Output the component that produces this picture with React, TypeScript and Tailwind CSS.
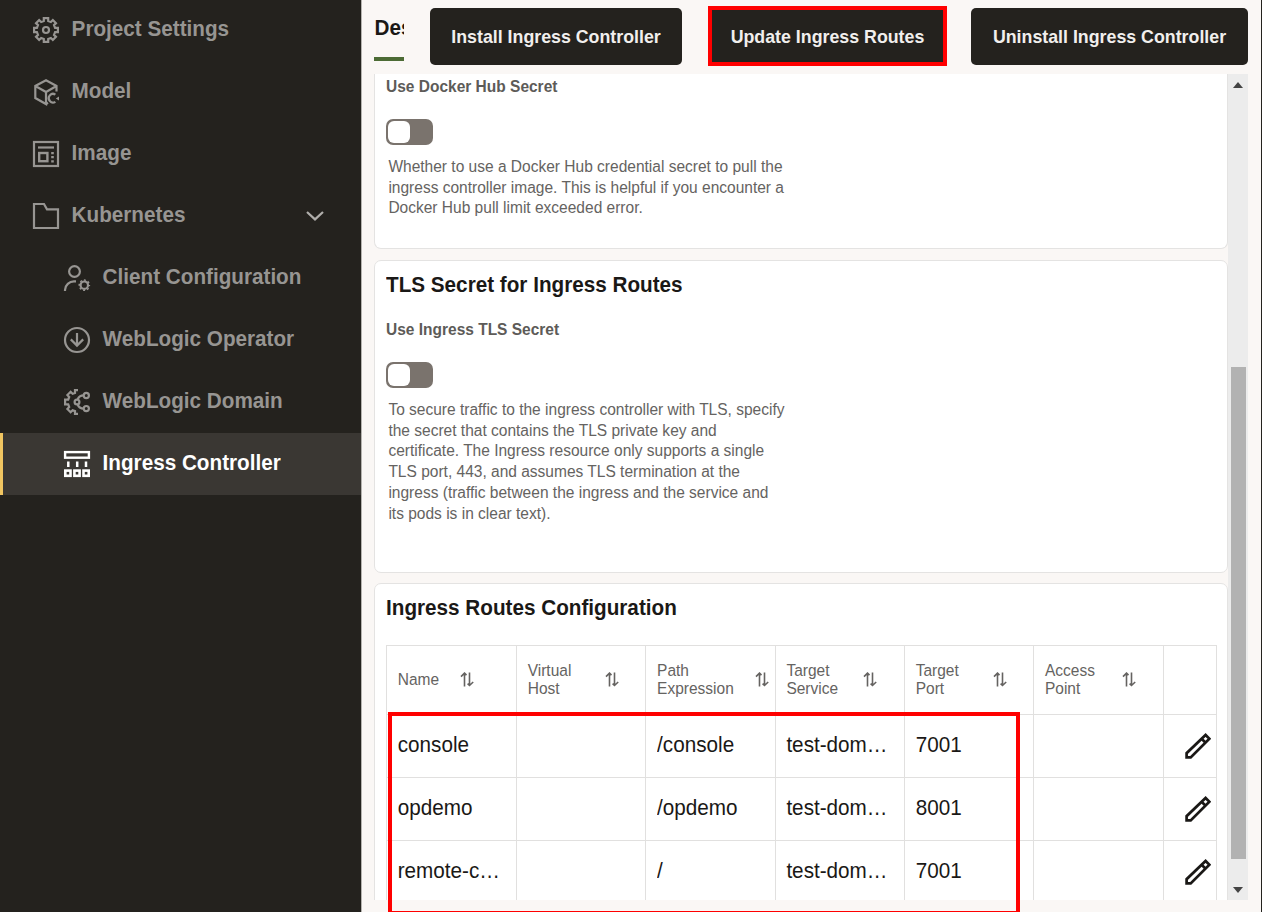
import type { ReactNode } from "react";

const gearPoints = (cx: number, cy: number, outer: number, inner: number, half: number) => {
  const points: string[] = [];
  for (let k = 0; k < 8; k++) {
    const a = (k * Math.PI) / 4;
    const at = (x: number, y: number) =>
      points.push(`${(cx + x * Math.cos(a) - y * Math.sin(a)).toFixed(2)},${(cy + x * Math.sin(a) + y * Math.cos(a)).toFixed(2)}`);
    at(-half, -inner);
    at(-half, -outer);
    at(half, -outer);
    at(half, -inner);
  }
  return points.join(" ");
};

function Icon({ children }: { children: ReactNode }) {
  return (
    <svg viewBox="0 0 26 26" fill="none" stroke="currentColor" strokeWidth="2.2" className="size-[26px] shrink-0 overflow-visible">
      {children}
    </svg>
  );
}

const SettingsIcon = () => (
  <Icon>
    <polygon points={gearPoints(13, 13, 11.9, 9.1, 2.2)} />
    <circle cx="13" cy="13" r="3" />
  </Icon>
);

const ModelIcon = () => (
  <Icon>
    <path d="M23.5 12.5V7L13 1.2 2.3 7v12L13 25V13L2.3 7M13 13l10.5-6" />
    <path d="M13 25l2-1.2M22.4 15.6a4.3 4.3 0 1 0 0 7.2" />
    <path d="M26 17.4v4l-3.2-2z" fill="currentColor" stroke="none" />
  </Icon>
);

const ImageIcon = () => (
  <Icon>
    <rect x="1" y="1" width="24" height="24" />
    <path d="M5 6.5h16" />
    <rect x="6.2" y="12" width="8.2" height="8.2" strokeWidth="2.4" />
    <path d="M19.5 11v10.5" strokeDasharray="2.2 1.9" strokeWidth="2.6" />
  </Icon>
);

const FolderIcon = () => (
  <Icon>
    <path d="M1 25V1h10l3 5.3h11V25z" />
  </Icon>
);

const ClientIcon = () => (
  <Icon>
    <circle cx="10.5" cy="6.5" r="5.4" />
    <path d="M1 26v-1a9 9 0 0 1 9-8.6h2" />
    <circle cx="20.3" cy="20.2" r="3.7" strokeWidth="2.2" />
    <circle cx="20.3" cy="20.2" r="5.1" strokeWidth="1.5" strokeDasharray="2 2.005" strokeDashoffset="1" />
  </Icon>
);

const OperatorIcon = () => (
  <Icon>
    <circle cx="13" cy="13" r="12" />
    <path d="M13 6v12.5M6.8 12.4l6.2 6.2 6.2-6.2" />
  </Icon>
);

const DomainIcon = () => (
  <Icon>
    <polyline points="14,1.1 11,1.1 11,3.9 8.6,4.8 6.6,2.8 3.4,6 5.2,8 4.2,10.7 1.1,10.7 1.1,15.3 4.2,15.3 5.2,18 3.4,20 6.6,23.2 8.6,21.2 11,22.1 11,24.9 14,24.9" />
    <circle cx="13" cy="13" r="2.4" />
    <circle cx="22.3" cy="6.5" r="2.6" />
    <circle cx="22.3" cy="19.6" r="2.6" />
    <path d="M13.6 10.6c1-3 3-4.2 6.2-4.2M13.6 15.4c1 3 3 4.2 6.2 4.2" />
  </Icon>
);

const IngressIcon = () => (
  <Icon>
    <rect x="1.1" y="1.1" width="23.8" height="5.6" strokeWidth="2.4" />
    <path d="M4.3 10.5V16M13.2 10.5V16M22 10.5V16" strokeWidth="2.5" />
    <rect x="1.3" y="19.6" width="5.2" height="5.2" strokeWidth="2.6" />
    <rect x="10.4" y="19.6" width="5.2" height="5.2" strokeWidth="2.6" />
    <rect x="19.5" y="19.6" width="5.2" height="5.2" strokeWidth="2.6" />
  </Icon>
);

const SortIcon = () => (
  <svg viewBox="0 0 14 15" fill="none" stroke="currentColor" strokeWidth="1.6" className="h-[15px] w-[14px] shrink-0">
    <path d="M4.5 14.5V1.4M1 4.6l3.5-3.5 2 2M9.5 0.5v13M7.6 11.6l1.9 1.9L13.2 10" />
  </svg>
);

const PencilIcon = () => (
  <svg viewBox="0 0 26 26" fill="none" stroke="currentColor" strokeWidth="2.7" className="size-[26px] shrink-0">
    <path d="M1.6 24.4v-4.2L20.6 2l3.8 3.8L5.7 24.4zM16.6 5.8l4 4" />
  </svg>
);

type NavEntry = { label: string; icon: ReactNode; nested?: boolean; active?: boolean; open?: boolean };

const nav: NavEntry[] = [
  { label: "Project Settings", icon: <SettingsIcon /> },
  { label: "Model", icon: <ModelIcon /> },
  { label: "Image", icon: <ImageIcon /> },
  { label: "Kubernetes", icon: <FolderIcon />, open: true },
  { label: "Client Configuration", icon: <ClientIcon />, nested: true },
  { label: "WebLogic Operator", icon: <OperatorIcon />, nested: true },
  { label: "WebLogic Domain", icon: <DomainIcon />, nested: true },
  { label: "Ingress Controller", icon: <IngressIcon />, nested: true, active: true },
];

function Sidebar() {
  return (
    <nav className="flex h-full w-[361px] shrink-0 flex-col bg-[#24221e]">
      {nav.map((item) => (
        <div
          key={item.label}
          className={`flex h-[62px] shrink-0 items-center border-l-[3px] pr-[37px] first:-mt-px ${
            item.active ? "border-[#f0c561] bg-[#3a3733] text-white" : "border-transparent text-[#979592]"
          } ${item.nested ? "pl-[61px]" : "pl-[30px]"}`}
        >
          {item.icon}
          <span className="mb-[2px] ml-[12.6px] flex-1 scale-y-[1.06] text-[20.7px] leading-[26px] font-bold">{item.label}</span>
          {item.open && (
            <svg viewBox="0 0 18 10" fill="none" stroke="#b0aeab" strokeWidth="2.2" className="h-[10px] w-[18px]">
              <path d="M1 1l8 7.4L17 1" />
            </svg>
          )}
        </div>
      ))}
    </nav>
  );
}

function ActionButton({ children, className }: { children: string; className: string }) {
  return (
    <button className={`h-[57px] shrink-0 rounded-[5px] bg-[#24221e] text-[17.8px] font-bold whitespace-nowrap text-[#f1efed] ${className}`}>
      <span className="mt-px block scale-y-[1.07]">{children}</span>
    </button>
  );
}

function Toggle() {
  return (
    <div className="flex h-[26px] w-[46.5px] items-center rounded-[7px] bg-[#7a736d] pl-[2.4px]">
      <div className="h-[21.5px] w-[21.5px] rounded-[6px] bg-white" />
    </div>
  );
}

const columns = [
  { lines: ["Name"], gap: "w-[62px]" },
  { lines: ["Virtual", "Host"], gap: "w-[77px]" },
  { lines: ["Path", "Expression"], gap: "w-[98px]" },
  { lines: ["Target", "Service"], gap: "w-[77px]" },
  { lines: ["Target", "Port"], gap: "w-[77px]" },
  { lines: ["Access", "Point"], gap: "w-[77px]" },
];

const routes = [
  ["console", "", "/console", "test-dom…", "7001", ""],
  ["opdemo", "", "/opdemo", "test-dom…", "8001", ""],
  ["remote-c…", "", "/", "test-dom…", "7001", ""],
];

const gridColumns = "grid grid-cols-[130px_129.4px_129.3px_129.3px_129.3px_129.3px_53px]";

function RoutesTable() {
  return (
    <div className="w-[831px] border-t border-l border-[#e1e0df]">
      <div className={`${gridColumns} h-[68.5px] border-b border-[#e1e0df]`}>
        {columns.map((column, i) => (
          <div key={i} className="flex items-center border-r border-[#e1e0df] pl-[10.7px] text-[15.5px] leading-[18px] text-[#656361]">
            <span className={`shrink-0 ${column.gap}`}>
              {column.lines.map((line) => (
                <span key={line} className="block scale-y-[1.07]">
                  {line}
                </span>
              ))}
            </span>
            <SortIcon />
          </div>
        ))}
        <div className="border-r border-[#e1e0df]" />
      </div>
      {routes.map((route) => (
        <div key={route[0]} className={`${gridColumns} h-[63.4px] border-b border-[#e1e0df]`}>
          {route.map((value, i) => (
            <div key={i} className="flex items-center border-r border-[#e1e0df] pb-[2px] pl-[10.7px]">
              <span className="scale-y-[1.06] text-[20.7px] leading-[26px] whitespace-nowrap text-[#1a1816]">{value}</span>
            </div>
          ))}
          <div className="flex items-center border-r border-[#e1e0df] pl-[21.4px] text-[#1a1816]">
            <PencilIcon />
          </div>
        </div>
      ))}
    </div>
  );
}

const card = "shrink-0 border border-[#e4e3e2] bg-white pl-[11px]";
const label = "scale-y-[1.07] text-[15.5px] leading-[20px] font-bold text-[#5d5b58]";
const helpLine = "block scale-y-[1.07]";
const heading = "scale-y-[1.06] text-[20.7px] leading-[26px] font-bold text-[#1a1816]";

function Help({ lines }: { lines: string[] }) {
  return (
    <p className="pl-[2.4px] text-[15.53px] leading-[20.7px] whitespace-nowrap text-[#656361]">
      {lines.map((line) => (
        <span key={line} className={helpLine}>
          {line}
        </span>
      ))}
    </p>
  );
}

export default function App() {
  return (
    <div className="relative flex h-[912px] w-[1262px] overflow-hidden bg-[#24221e] font-['Liberation_Sans',Arial,sans-serif]">
      <Sidebar />
      <main className="flex h-full w-[900px] flex-col border-l border-[#b5b3af] bg-[#faf7f5] pl-3">
        <header className="flex h-[74px] shrink-0 items-start">
          <div className="mt-[14px] h-[47px] w-[30px] overflow-hidden border-b-4 border-[#4c6b35] pl-[0.5px]">
            <div className={`${heading} mt-px whitespace-nowrap`}>Des</div>
          </div>
          <ActionButton className="mt-2 ml-[26px] w-[252px]">Install Ingress Controller</ActionButton>
          <ActionButton className="mt-2 ml-[27px] w-[237px]">Update Ingress Routes</ActionButton>
          <ActionButton className="mt-2 ml-[25px] w-[277px]">Uninstall Ingress Controller</ActionButton>
        </header>

        <div className="flex h-[826px] w-[874px] shrink-0">
          <div className="flex w-[854px] flex-col overflow-hidden">
            <section className={`${card} h-[175px] rounded-b-[7px] border-t-0 pt-[3px]`}>
              <div className={label}>Use Docker Hub Secret</div>
              <div className="mt-[22px] mb-[12px]">
                <Toggle />
              </div>
              <Help
                lines={[
                  "Whether to use a Docker Hub credential secret to pull the",
                  "ingress controller image. This is helpful if you encounter a",
                  "Docker Hub pull limit exceeded error.",
                ]}
              />
            </section>

            <section className={`${card} mt-[11px] h-[313px] rounded-[7px] pt-[11px]`}>
              <h2 className={heading}>TLS Secret for Ingress Routes</h2>
              <div className={`${label} mt-[22px]`}>Use Ingress TLS Secret</div>
              <div className="mt-[22px] mb-[12px]">
                <Toggle />
              </div>
              <Help
                lines={[
                  "To secure traffic to the ingress controller with TLS, specify",
                  "the secret that contains the TLS private key and",
                  "certificate. The Ingress resource only supports a single",
                  "TLS port, 443, and assumes TLS termination at the",
                  "ingress (traffic between the ingress and the service and",
                  "its pods is in clear text).",
                ]}
              />
            </section>

            <section className={`${card} mt-[10px] h-[420px] rounded-[7px] pt-[11px]`}>
              <h2 className={`${heading} mb-[24px]`}>Ingress Routes Configuration</h2>
              <RoutesTable />
            </section>
          </div>

          <div className="flex w-[20px] flex-col items-center bg-[#ececec]">
            <svg viewBox="0 0 10 6" className="mt-[8px] h-[6px] w-[10px] fill-[#444]">
              <path d="M0 6L5 0l5 6z" />
            </svg>
            <div className="mt-[279px] h-[492px] w-[15px] bg-[#b2b2b2]" />
            <svg viewBox="0 0 10 6" className="mt-[28px] h-[6px] w-[10px] fill-[#444]">
              <path d="M0 0l5 6 5-6z" />
            </svg>
          </div>
        </div>
      </main>

      <div className="absolute top-[6px] left-[708px] h-[60px] w-[239px] border-4 border-[#ff0000]" />
      <div className="absolute top-[712px] left-[388px] h-[203px] w-[632px] border-4 border-[#ff0000]" />
    </div>
  );
}
